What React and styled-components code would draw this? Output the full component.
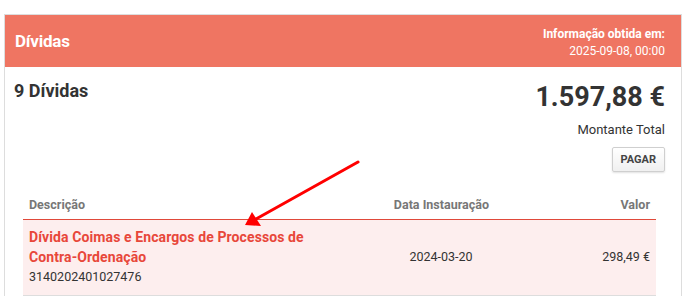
import React from "react";
import styled, { createGlobalStyle } from "styled-components";

const Global = createGlobalStyle`
  html, body { margin: 0; padding: 0; background: #fff; }
  body { font-family: Roboto, "Liberation Sans", Arial, sans-serif; color: #333; }
`;

const Page = styled.div`
  position: relative;
  padding: 14px 1px 0 4px;
`;

const Panel = styled.section`
  border: 1px solid #dddddd;
  border-bottom: none;
  background: #fff;
`;

const Header = styled.header`
  height: 52px;
  background: #ef7562;
  color: #fff;
  display: flex;
  align-items: center;
  justify-content: space-between;
  padding: 0 16px 0 10px;
`;

const Title = styled.h1`
  margin: 0;
  font-size: 17px;
  font-weight: 700;
  letter-spacing: -0.2px;
`;

const Info = styled.div`
  text-align: right;
  font-size: 12px;
  line-height: 17px;
  margin-top: 3px;
  & strong { font-weight: 700; }
`;

const Body = styled.div`
  padding: 12px 16px 0 9px;
`;

const Summary = styled.div`
  display: flex;
  justify-content: space-between;
  align-items: flex-start;
`;

const Count = styled.h2`
  margin: 1px 0 0;
  font-size: 18px;
  font-weight: 700;
  color: #333;
`;

const Totals = styled.div`
  display: flex;
  flex-direction: column;
  align-items: flex-end;
`;

const Amount = styled.div`
  font-size: 27px;
  font-weight: 700;
  color: #333;
  line-height: 34px;
  margin-top: 1px;
`;

const AmountLabel = styled.div`
  font-size: 13px;
  color: #333;
  margin-top: 8px;
`;

const PayButton = styled.button`
  margin-top: 10px;
  height: 25px;
  padding: 0 8px;
  font-family: inherit;
  font-size: 11px;
  font-weight: 700;
  color: #444;
  background: linear-gradient(#ffffff, #f0f0f0);
  border: 1px solid #cfcfcf;
  border-radius: 2px;
  box-shadow: 0 1px 2px rgba(0,0,0,0.12);
`;

const TableWrap = styled.div`
  padding: 19px 9px 0 9px;
`;

const Table = styled.table`
  width: 100%;
  border-collapse: collapse;
  table-layout: fixed;
  font-size: 12.5px;
`;

const Col = styled.col`
  width: ${(p) => p.$w}px;
`;

const Th = styled.th`
  text-align: ${(p) => p.$align || "left"};
  font-size: 12.5px;
  font-weight: 700;
  color: #777;
  white-space: nowrap;
  padding: 6px 6px 7px;
  border-bottom: 1px solid #e0493a;
`;

const Tr = styled.tr`
  background: #fdeeee;
  border-bottom: 1px solid #dddddd;
`;

const Td = styled.td`
  text-align: ${(p) => p.$align || "left"};
  padding: 7px 6px 8px;
  vertical-align: middle;
  color: #333;
  line-height: 20px;
`;

const DebtTitle = styled.div`
  color: #e8473a;
  font-weight: 700;
  font-size: 14px;
  letter-spacing: 0.1px;
`;

const Arrow = styled.svg`
  position: absolute;
  left: 0;
  top: 0;
  pointer-events: none;
`;

export default function App() {
  return (
    <Page>
      <Global />
      <Panel>
        <Header>
          <Title>Dívidas</Title>
          <Info>
            <strong>Informação obtida em:</strong>
            <div>2025-09-08, 00:00</div>
          </Info>
        </Header>
        <Body>
          <Summary>
            <Count>9 Dívidas</Count>
            <Totals>
              <Amount>1.597,88 €</Amount>
              <AmountLabel>Montante Total</AmountLabel>
              <PayButton>PAGAR</PayButton>
            </Totals>
          </Summary>
          <TableWrap>
            <Table>
              <colgroup>
                <Col $w={364} />
                <Col $w={108} />
                <Col $w={161} />
              </colgroup>
              <thead>
                <tr>
                  <Th>Descrição</Th>
                  <Th $align="right">Data Instauração</Th>
                  <Th $align="right">Valor</Th>
                </tr>
              </thead>
              <tbody>
                <Tr>
                  <Td>
                    <DebtTitle>
                      Dívida Coimas e Encargos de Processos de
                      <br />
                      Contra-Ordenação
                    </DebtTitle>
                    <div>3140202401027476</div>
                  </Td>
                  <Td $align="center">2024-03-20</Td>
                  <Td $align="right">298,49 €</Td>
                </Tr>
              </tbody>
            </Table>
          </TableWrap>
        </Body>
      </Panel>
      <Arrow width="683" height="302" viewBox="0 0 683 302">
        <line x1="358" y1="162" x2="256" y2="219" stroke="#ff0000" strokeWidth="3" strokeLinecap="round" />
        <polygon points="245,225 252,212 261,226" fill="#ff0000" />
      </Arrow>
    </Page>
  );
}
